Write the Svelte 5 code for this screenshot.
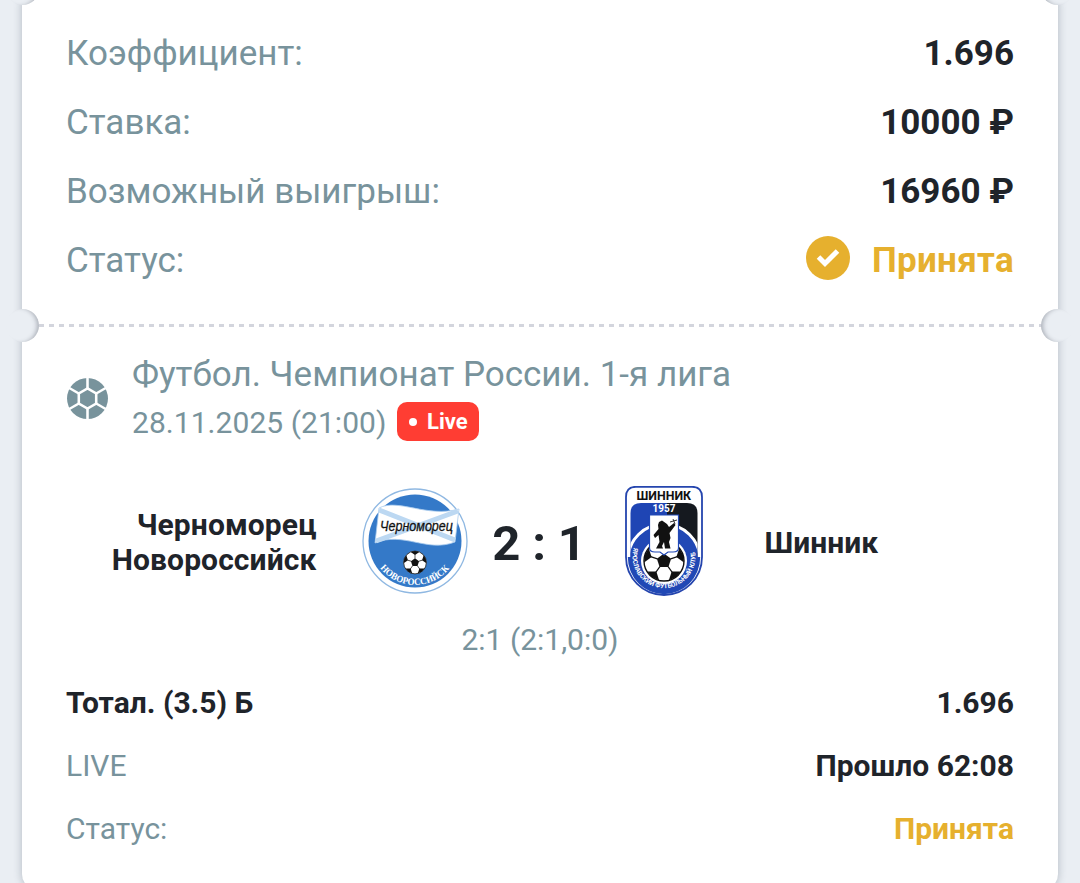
<script lang="ts">
	const summary = [
		{ label: 'Коэффициент:', value: '1.696' },
		{ label: 'Ставка:', value: '10000 ₽' },
		{ label: 'Возможный выигрыш:', value: '16960 ₽' }
	];

	const angles = [0, 60, 120, 180, 240, 300];
	const spokes = [0, 72, 144, 216, 288];
</script>

{#snippet ball()}
	<circle r="20" fill="#fff" stroke="#111" stroke-width="1.4" />
	<path d="M0-7.5 7.1-2.3 4.4 6H-4.4L-7.1-2.3Z" fill="#111" />
	{#each spokes as a}
		<g transform="rotate({a})">
			<path d="M0-7V-14" stroke="#111" stroke-width="1.2" />
			<path d="M-7.5-18.5 0-13 7.5-18.5 0-20Z" fill="#111" />
		</g>
	{/each}
{/snippet}

<div class="page">
	<div class="ticket">
		<span class="notch left top"></span>
		<span class="notch right top"></span>

		<section class="summary">
			{#each summary as row}
				<div class="row">
					<span class="label">{row.label}</span>
					<span class="value">{row.value}</span>
				</div>
			{/each}
			<div class="row">
				<span class="label">Статус:</span>
				<span class="value accepted">
					<svg class="check" viewBox="0 0 44 44">
						<circle cx="22" cy="22" r="22" fill="#e6b02e" />
						<path d="M12.500 21 19 27.500 31.500 15" fill="none" stroke="#fff" stroke-width="5" />
					</svg>
					Принята
				</span>
			</div>
		</section>

		<div class="divider">
			<span class="notch left"></span>
			<svg class="dashes" viewBox="0 0 1004 4">
				<path d="M1 1.500H1004" stroke="#d3d5dd" stroke-width="3" stroke-dasharray="5 5" />
			</svg>
			<span class="notch right"></span>
		</div>

		<section class="event">
			<header>
				<svg class="sport" viewBox="-21 -21 42 42">
					<circle r="20" fill="#78939c" />
					<g fill="none" stroke="#fff" stroke-width="2.5">
						<path d="M0-9.800 8.500-4.900V4.900L0 9.800-8.500 4.900V-4.900Z" />
						{#each angles as a}
							<path d="M0-9.800V-22" transform="rotate({a})" />
						{/each}
					</g>
				</svg>
				<div>
					<div class="league">Футбол. Чемпионат России. 1-я лига</div>
					<div class="date">
						28.11.2025 (21:00)
						<span class="live"><i></i>Live</span>
					</div>
				</div>
			</header>

			<div class="match">
				<div class="team home">Черноморец<br />Новороссийск</div>
				<svg class="crest" viewBox="0 0 110 110">
					<defs>
						<path id="home-arc" d="M18.500 79.500A44 44 0 0 0 91.500 79.500" />
					</defs>
					<circle cx="55" cy="55" r="52" fill="#fff" stroke="#8fb8e2" stroke-width="1.300" />
					<circle cx="55" cy="55" r="46.500" fill="#3479c8" />
					<path
						d="M19 22C38 12 67 32 99 23L95 56C67 67 43 45 15 57Z"
						fill="#fff"
						stroke="#a9cbed"
						stroke-width=".8"
					/>
					<path d="M19 24 95 54M98 25 16 55" stroke="#bcd8f2" stroke-width="5" />
					<text x="20" y="44.500" class="script" textLength="73" lengthAdjust="spacingAndGlyphs">Черноморец</text>
					<g transform="translate(55 76.500) scale(.57)">{@render ball()}</g>
					<text class="ribbon">
						<textPath href="#home-arc" startOffset="3" textLength="79" lengthAdjust="spacingAndGlyphs">НОВОРОССИЙСК</textPath>
					</text>
				</svg>
				<div class="score">2 : 1</div>
				<svg class="crest" viewBox="0 0 110 110">
					<defs>
						<path id="away-arc" d="M25 61A31.500 31.500 0 1 0 85 61" />
						<clipPath id="away-clip">
							<path d="M21.500 27Q21.500 17 32 17H78Q88.500 17 88.500 27V71A33.500 34 0 0 1 21.500 71Z" />
						</clipPath>
					</defs>
					<path
						d="M17 11Q17 .8 27 .8H83Q93 .8 93 11V71A38 38 0 0 1 17 71Z"
						fill="#fff"
						stroke="#2545ae"
						stroke-width="1.800"
					/>
					<g clip-path="url(#away-clip)">
						<path d="M20 15H58V80H20Z" fill="#1f45b4" />
						<path d="M58 15H90V80H58Z" fill="#15191f" />
						<circle cx="55" cy="74" r="36" fill="#2148b5" stroke="#fff" stroke-width="3" />
					</g>
					<path d="M18.800 71A36 37 0 0 0 91.200 71H86A31 31 0 0 1 24 71Z" fill="#2148b5" />
					<circle cx="55" cy="75" r="23" fill="#fff" />
					<text x="27.500" y="14" class="name" textLength="54.500" lengthAdjust="spacingAndGlyphs">ШИННИК</text>
					<text x="43.500" y="25.500" class="year" textLength="23" lengthAdjust="spacingAndGlyphs">1957</text>
					<g transform="translate(55 75)">{@render ball()}</g>
					<path
						d="M40.500 29H69.500V62Q69.500 66 64 66H59L55 69 51 66H46Q40.500 66 40.500 62Z"
						fill="#fff"
						stroke="#2148b5"
						stroke-width="1.200"
					/>
					<path
						d="M50 36 53 34.500 58 38 60 41 65 37 66.500 39 62 45 60.500 47 61.500 52 60 56 61.500 62.500H56L55 56 53 60 54 62.500H47L50.500 56 49.500 49 46 52 44.500 49 49.500 43 49 39Z"
						fill="#111"
					/>
					<path d="M61 36 68 34M64 33 66 38" stroke="#333" stroke-width="1" />
					<text class="motto">
						<textPath href="#away-arc" startOffset="1" textLength="112" lengthAdjust="spacingAndGlyphs">ЯРОСЛАВСКИЙ ФУТБОЛЬНЫЙ КЛУБ</textPath>
					</text>
				</svg>
				<div class="team away">Шинник</div>
			</div>

			<div class="periods">2:1 (2:1,0:0)</div>

			<div class="details">
				<div class="line"><b>Тотал. (3.5) Б</b><b>1.696</b></div>
				<div class="line"><span>LIVE</span><b>Прошло 62:08</b></div>
				<div class="line"><span>Статус:</span><b class="accepted">Принята</b></div>
			</div>
		</section>
	</div>
</div>

<style>
	:global(body) {
		background: #eaeef3;
	}

	.page {
		height: 883px;
		overflow: hidden;
		padding: 0 22px;
		box-sizing: border-box;
		background: #eaeef3;
		font-family: Roboto, sans-serif;
		color: #1f242a;
	}

	.ticket {
		position: relative;
		height: 890px;
		background: #fff;
		border-radius: 0 0 16px 16px;
		box-shadow: 0 0 9px rgba(60, 70, 90, 0.32);
	}

	.summary {
		padding: 19px 44px 0;
		height: 306px;
		box-sizing: border-box;
	}

	.row {
		display: flex;
		justify-content: space-between;
		align-items: center;
		height: 69px;
		font-size: 35px;
	}

	.label {
		color: #78939c;
	}

	.value {
		display: flex;
		align-items: center;
		font-weight: 700;
	}

	.accepted {
		color: #e6b02e;
	}

	.row .accepted {
		letter-spacing: 0.3px;
	}

	.check {
		width: 44px;
		height: 44px;
		margin: -6px 22px 0 0;
	}

	/* Perforation between the two parts of the ticket */
	.divider {
		position: relative;
		display: flex;
		align-items: center;
		justify-content: center;
		height: 40px;
	}

	.dashes {
		width: 1004px;
		height: 4px;
	}

	.notch {
		position: absolute;
		top: 3px;
		width: 33px;
		height: 33px;
		border-radius: 50%;
		background: #eaeef3;
	}

	.notch.left {
		left: -16px;
		box-shadow: inset -4px 0 4px -2px rgba(60, 65, 80, 0.35);
	}

	.notch.right {
		right: -16px;
		box-shadow: inset 4px 0 4px -2px rgba(60, 65, 80, 0.35);
	}

	.notch.top {
		top: -28px;
	}

	.event {
		padding: 0 44px;
	}

	header {
		display: flex;
		align-items: center;
		gap: 23px;
		height: 104px;
		color: #78939c;
	}

	.sport {
		width: 43px;
		height: 43px;
	}

	.league {
		font-size: 35px;
		line-height: 50px;
	}

	.date {
		display: flex;
		align-items: center;
		gap: 11px;
		height: 46px;
		margin-top: -1px;
		padding-bottom: 1px;
		font-size: 30px;
		letter-spacing: 0.05px;
	}

	.live {
		display: flex;
		align-items: center;
		gap: 10px;
		height: 39px;
		margin-top: -1px;
		padding: 0 11.5px;
		border-radius: 10px;
		background: #ff3d33;
		color: #fff;
		font-size: 22px;
		font-weight: 700;
	}

	.live i {
		width: 8px;
		height: 8px;
		border-radius: 50%;
		background: #fff;
	}

	.match {
		display: grid;
		grid-template-columns: 293.5px 110px 139px 110px 1fr;
		align-items: center;
		height: 182px;
	}

	.team {
		font-size: 30px;
		font-weight: 700;
		line-height: 35px;
	}

	.home {
		padding: 2px 43px 0 0;
		text-align: right;
		letter-spacing: 0.1px;
	}

	.away {
		padding: 2px 0 0 46px;
	}

	.crest {
		width: 110px;
		height: 110px;
	}

	.script {
		font: italic 14.5px 'Liberation Sans', sans-serif;
		fill: #111;
		stroke: #111;
		stroke-width: 0.3;
	}

	.ribbon {
		font: bold 9.5px 'Liberation Serif', serif;
		fill: #fff;
	}

	.name {
		font: bold 13px Roboto, sans-serif;
		fill: #111;
	}

	.year {
		font: bold 10px Roboto, sans-serif;
		fill: #fff;
	}

	.motto {
		font: bold 6.5px Roboto, sans-serif;
		fill: #fff;
	}

	.score {
		padding-top: 5px;
		text-align: center;
		font-size: 49px;
		font-weight: 700;
		letter-spacing: -0.2px;
	}

	.periods {
		height: 49px;
		line-height: 35px;
		margin-top: -10px;
		text-align: center;
		font-size: 30px;
		color: #78939c;
	}

	.line {
		display: flex;
		align-items: center;
		justify-content: space-between;
		height: 63px;
		font-size: 30px;
	}

	.line span {
		color: #78939c;
	}
</style>
